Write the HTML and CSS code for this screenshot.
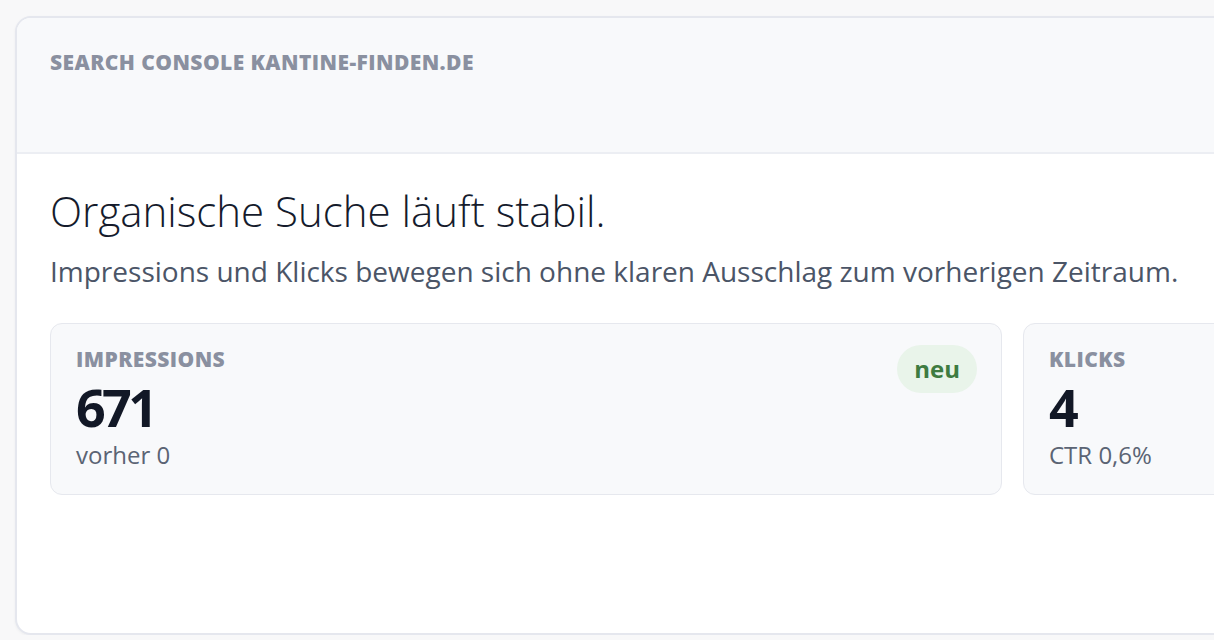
FILE: index.html
```html
<!DOCTYPE html>
<html lang="de">
<head>
    <meta charset="UTF-8">
    <meta name="viewport" content="width=device-width, initial-scale=1.0">
    <title>Search Console</title>
    <link rel="stylesheet" href="styles.css">
</head>
<body>
    <div class="panel">
        <div class="panel-head">
            <h2>Search Console kantine-finden.de</h2>
        </div>
        <div class="panel-body">
            <h1>Organische Suche läuft stabil.</h1>
            <p class="lead">Impressions und Klicks bewegen sich ohne klaren Ausschlag zum vorherigen Zeitraum.</p>

            <div class="metrics">
                <div class="metric">
                    <div class="metric-text">
                        <div class="metric-label">Impressions</div>
                        <div class="metric-value">671</div>
                        <div class="metric-note">vorher 0</div>
                    </div>
                    <span class="badge">neu</span>
                </div>
                <div class="metric">
                    <div class="metric-text">
                        <div class="metric-label">Klicks</div>
                        <div class="metric-value">4</div>
                        <div class="metric-note">CTR 0,6%</div>
                    </div>
                </div>
            </div>
        </div>
    </div>
</body>
</html>
```

FILE: styles.css
```css
body {
    margin: 0;
    padding: 16px 0 0 15px;
    background: #f8f8f9;
    font-family: "Open Sans", sans-serif;
    overflow: hidden;
}
.panel {
    width: 1993px;
    height: 615px;
    background: #fff;
    border: 2px solid #e5e7ee;
    border-radius: 16px;
    overflow: hidden;
    box-shadow: 0 1px 3px rgba(20, 30, 60, 0.05);
}
.panel-head {
    height: 104px;
    padding: 30px 33px 0;
    background: #f8f9fb;
    border-bottom: 2px solid #eceef3;
}
.panel-head h2 {
    margin: 0;
    font-size: 21px;
    font-weight: 800;
    line-height: 28px;
    letter-spacing: 0.02em;
    text-transform: uppercase;
    color: #8a90a0;
}
.panel-body {
    padding: 32px 34px 0 33px;
}
h1 {
    margin: 0;
    font-size: 42px;
    font-weight: 300;
    line-height: 50px;
    color: #151b2c;
}
.lead {
    margin: 14px 0 0;
    font-size: 28px;
    line-height: 42px;
    color: #4b5567;
}
.metrics {
    display: grid;
    grid-template-columns: 952px 952px;
    gap: 21px;
    margin-top: 31px;
}
.metric {
    display: flex;
    justify-content: space-between;
    align-items: flex-start;
    height: 172px;
    box-sizing: border-box;
    padding: 21px 24px 20px 25px;
    background: #f8f9fb;
    border: 1.5px solid #e6e8ee;
    border-radius: 12px;
}
.metric-label {
    font-size: 21px;
    font-weight: 800;
    line-height: 28px;
    letter-spacing: 0.02em;
    text-transform: uppercase;
    color: #8a90a0;
}
.metric-value {
    margin-top: 5px;
    font-size: 52px;
    font-weight: 700;
    line-height: 57px;
    letter-spacing: -0.07em;
    color: #121826;
}
.metric-note {
    margin-top: 2px;
    font-size: 24px;
    line-height: 36px;
    color: #5b6474;
}
.badge {
    padding: 9px 17px;
    border-radius: 24px;
    background: #e9f4ea;
    color: #3e7b41;
    font-size: 24px;
    font-weight: 700;
    line-height: 30px;
}
```
